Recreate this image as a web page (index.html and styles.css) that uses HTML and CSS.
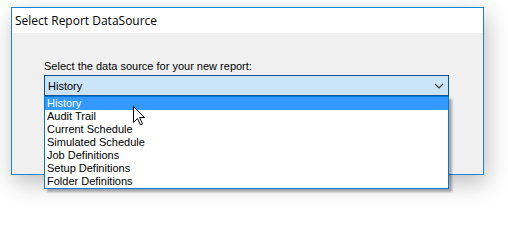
FILE: index.html
```html
<!DOCTYPE html>
<html lang="en">
<head>
    <meta charset="UTF-8">
    <title>Select Report DataSource</title>
    <link rel="stylesheet" href="styles.css">
</head>
<body>
    <div class="dialog">
        <div class="title-bar">Select Report DataSource</div>
        <div class="client">
            <label class="prompt" for="fuente">Select the data source for your new report:</label>
            <div class="combo" id="fuente">
                <span>History</span>
                <svg class="chevron" width="10" height="6" viewBox="0 0 10 6">
                    <path d="M1 1 L5 5 L9 1" fill="none" stroke="#404040" stroke-width="1.2"/>
                </svg>
            </div>
            <ul class="dropdown">
                <li class="selected">History</li>
                <li>Audit Trail</li>
                <li>Current Schedule</li>
                <li>Simulated Schedule</li>
                <li>Job Definitions</li>
                <li>Setup Definitions</li>
                <li>Folder Definitions</li>
            </ul>
            <svg class="cursor" width="13" height="20" viewBox="0 0 13 20">
                <path d="M0.5 0.5 L0.5 16.5 L4.5 12.5 L7.5 19 L9.5 18 L6.7 11.5 L11.5 11.5 Z" fill="#fff" stroke="#000" stroke-width="1"/>
            </svg>
        </div>
    </div>
</body>
</html>
```

FILE: styles.css
```css
html, body {
    min-height: 100vh;
}
body {
    margin: 0;
    padding-top: 7px;
    box-sizing: border-box;
    background-color: #ffffff;
    font-family: "Liberation Sans", Arial, sans-serif;
    font-size: 11px;
    color: #000000;
}
.dialog {
    margin-left: 11px;
    width: 471px;
    height: 166px;
    border: 1px solid #1883d7;
    background-color: #f0f0f0;
    box-shadow: 3px 8px 22px rgba(0, 0, 0, 0.26);
    display: flex;
    flex-direction: column;
}
.title-bar {
    height: 25px;
    line-height: 25px;
    padding-left: 3px;
    background-color: #ffffff;
    font-family: "Segoe UI", "Open Sans", sans-serif;
    font-size: 12px;
}
.client {
    position: relative;
    flex: 1;
    padding: 27px 0 0 32px;
}
.prompt {
    display: block;
    height: 13px;
    line-height: 13px;
    margin-bottom: 2px;
}
.combo {
    box-sizing: border-box;
    width: 405px;
    height: 21px;
    border: 1px solid #005499;
    background-color: #cce4f7;
    display: flex;
    align-items: center;
    justify-content: space-between;
    padding: 0 3px;
}
.chevron {
    margin-right: 1px;
}
.dropdown {
    position: absolute;
    left: 32px;
    top: 63px;
    width: 403px;
    margin: 0;
    padding: 0;
    list-style: none;
    background-color: #ffffff;
    border: 1px solid #0078d7;
    box-shadow: 3px 3px 2px rgba(0, 0, 0, 0.3);
}
.dropdown li {
    height: 13px;
    line-height: 13px;
    padding-left: 2px;
}
.dropdown li.selected {
    background-color: #3399ff;
    color: #ffffff;
}
.cursor {
    position: absolute;
    left: 121px;
    top: 73px;
}
```
